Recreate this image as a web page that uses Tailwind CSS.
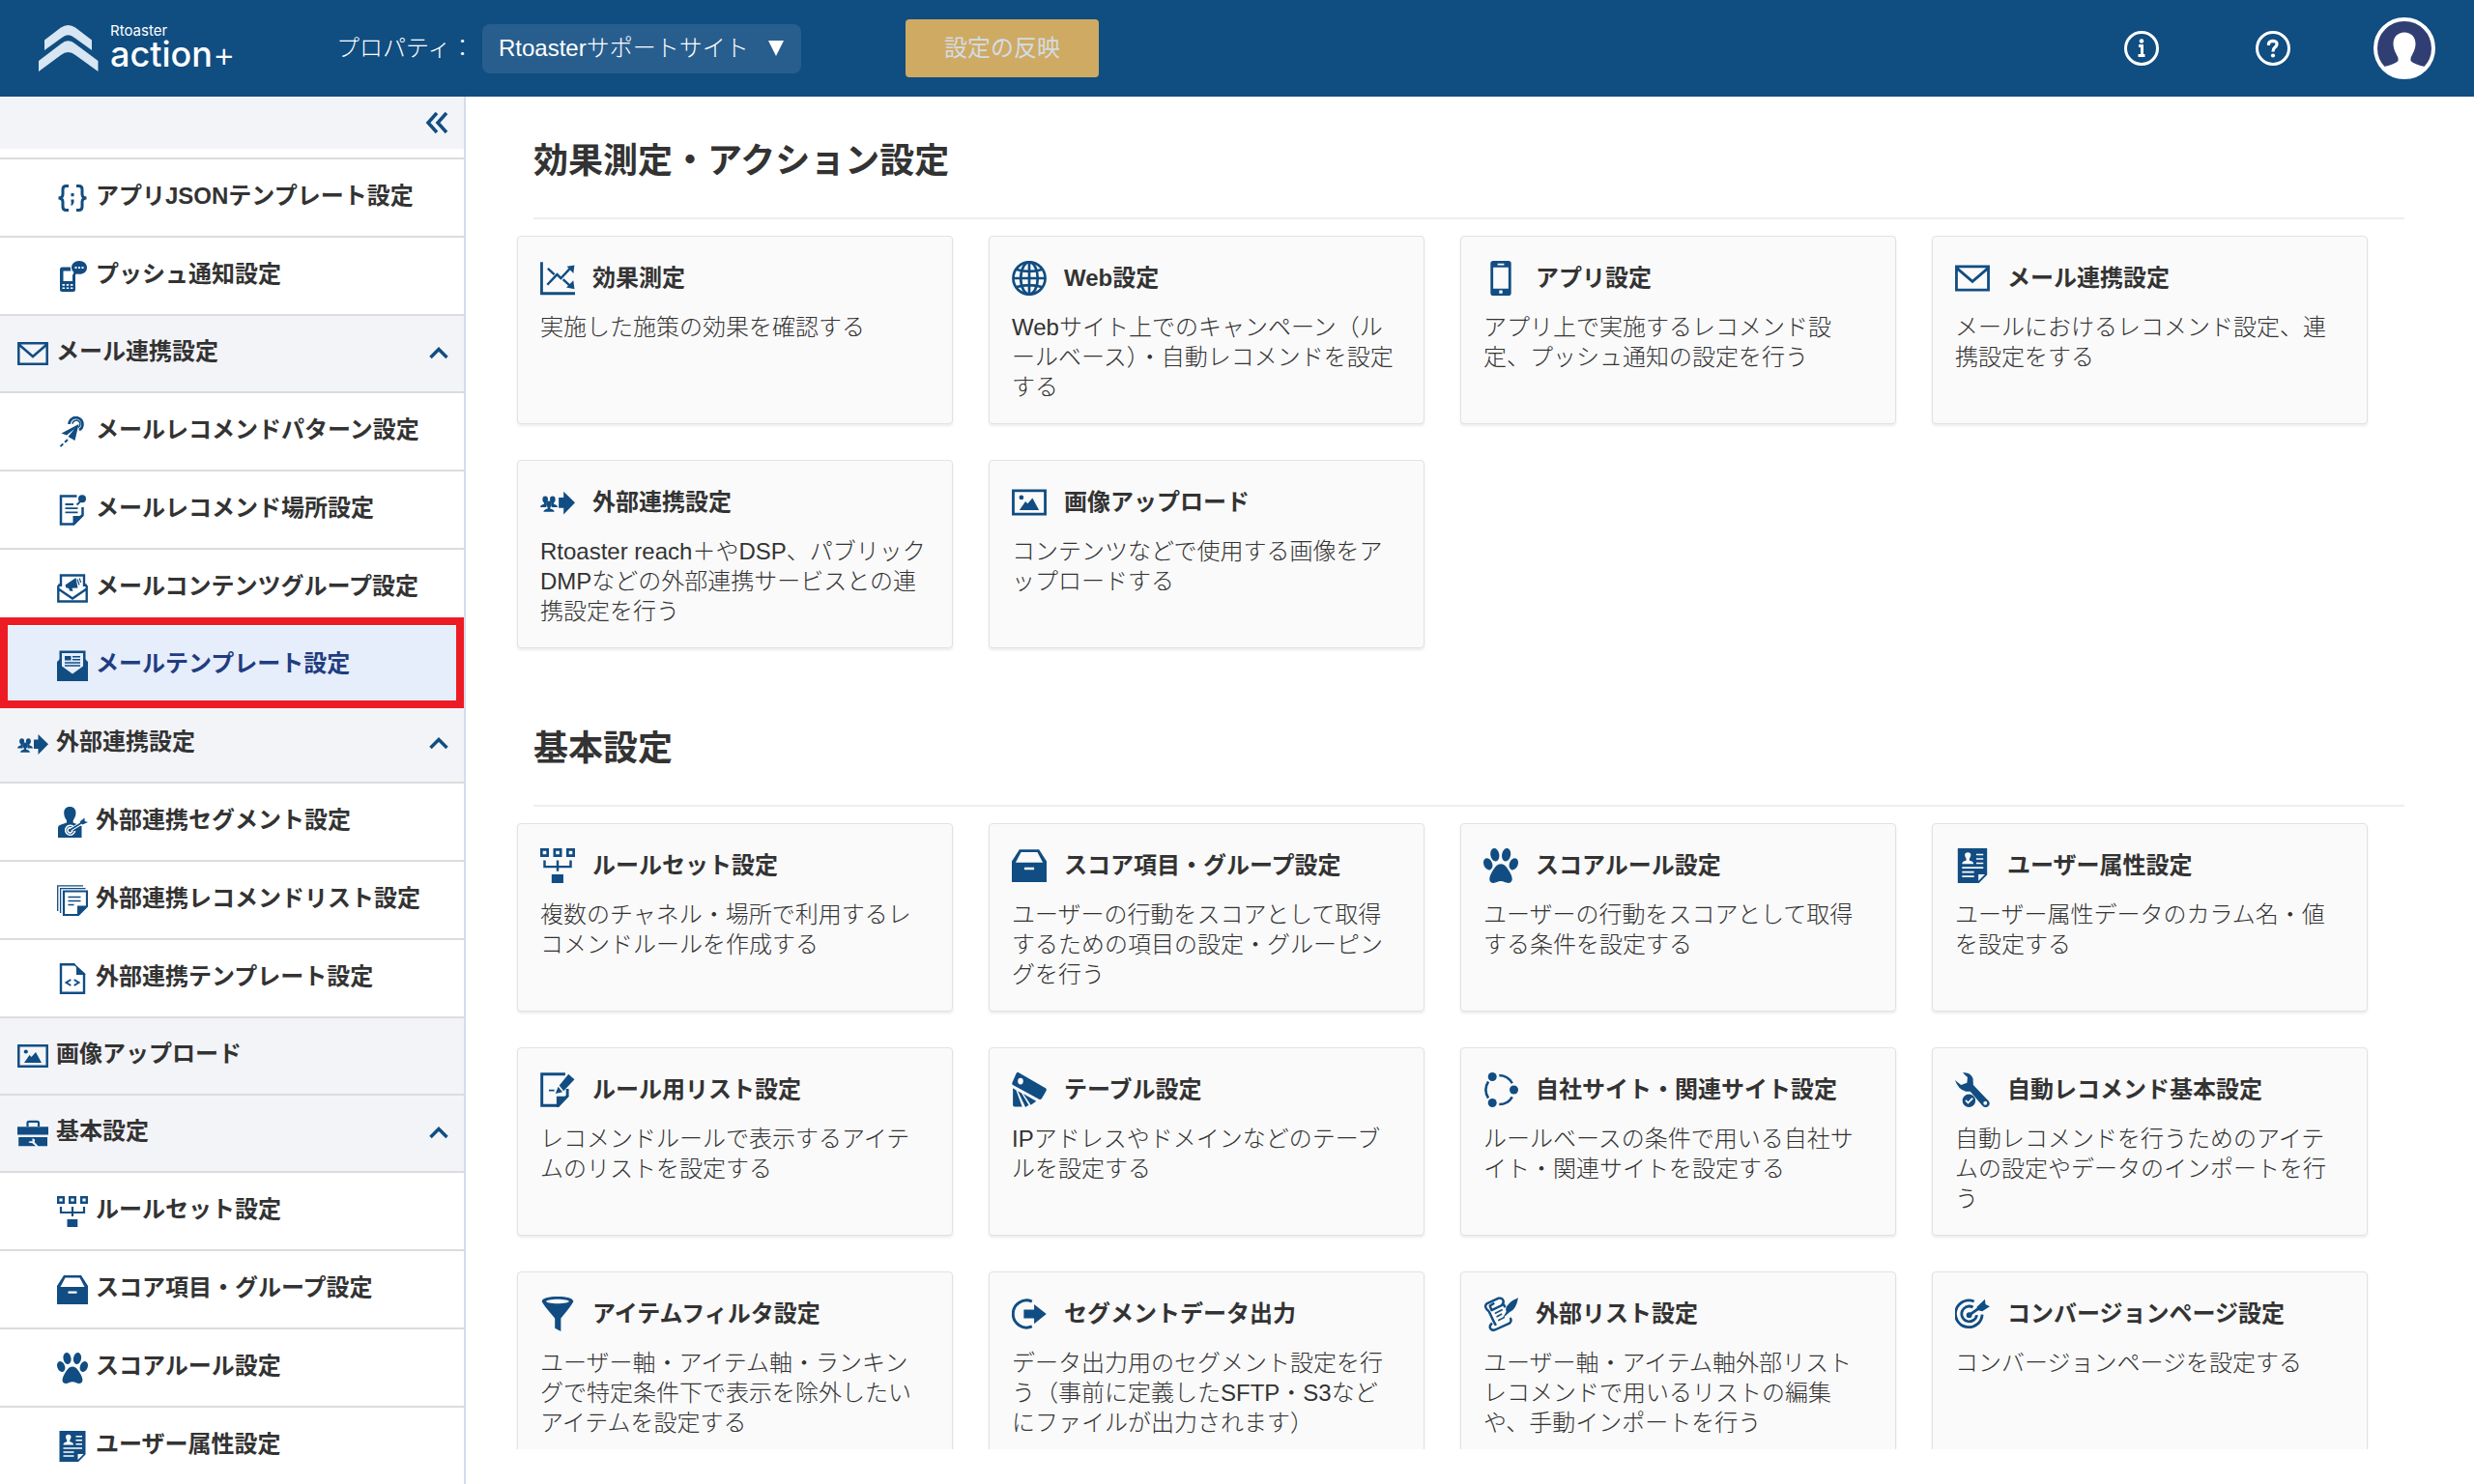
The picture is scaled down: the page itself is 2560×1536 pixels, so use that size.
<!DOCTYPE html>
<html lang="ja">
<head>
<meta charset="utf-8">
<meta name="viewport" content="width=device-width, initial-scale=1">
<title>Rtoaster action+</title>
<script src="https://cdn.jsdelivr.net/npm/@tailwindcss/browser@4"></script>
</head>
<body class="bg-white text-[#333] font-['Liberation_Sans','Noto_Sans_CJK_JP',sans-serif]">

<svg class="hidden" aria-hidden="true">
  <symbol id="i-json" viewBox="0 0 32 32"><path fill="none" stroke="currentColor" stroke-width="3" d="M12 3.500H9.500Q6 3.500 6 7V12Q6 16 1.500 16Q6 16 6 20V25Q6 28.500 9.500 28.500H12M20 3.500H22.500Q26 3.500 26 7V12Q26 16 30.500 16Q26 16 26 20V25Q26 28.500 22.500 28.500H20"/><path fill="currentColor" d="M14.500 11h3v3.200h-3zM14.500 17.500h3v3l-1.500 3h-1.800l.8-3h-.5z"/></symbol>
  <symbol id="i-push" viewBox="0 0 32 32"><path fill="currentColor" fill-rule="evenodd" d="M5 6.500H14a9 9 0 0 0 .5 4H6.500V21H16V15l3-2.500V29.500a2.500 2.500 0 0 1-2.500 2.500h-11A2.500 2.500 0 0 1 3 29.500V9A2.500 2.500 0 0 1 5 6.500zM5.500 24v1.800h2.500V24zm4.200 0v1.800h2.500V24zm4.200 0v1.800h2.500V24zM5.500 27.500v1.500h2.500v-1.500zm4.200 0v1.500h2.500v-1.500zm4.200 0v1.500h2.500v-1.500z"/><path fill="currentColor" fill-rule="evenodd" d="M23 0c4.600 0 8 3 8 7s-3.400 6.800-7.800 6.800c-1 0-2-.2-2.800-.4L16 15.500l1.400-3.800C15.800 10.400 15 8.800 15 7c0-4 3.400-7 8-7zM18.500 6v2h2V6zm3.500 0v2h2V6zm3.500 0v2h2V6z"/></symbol>
  <symbol id="i-mail" viewBox="0 0 32 32"><path fill="none" stroke="currentColor" stroke-width="2.500" d="M1.300 5.200H30.700V26.800H1.300zM1.500 6.500L16 19L30.500 6.500"/></symbol>
  <symbol id="i-target-plane" viewBox="0 0 32 32"><g fill="none" stroke="currentColor"><path stroke-width="2.600" d="M12.500 8A7 7 0 1 1 23 14.200"/><path stroke-width="1.500" d="M16 7.800A4 4 0 1 1 22 11.500"/><path stroke-width="2" stroke-dasharray="4 2.400" d="M11 24L3 31.500"/></g><path fill="currentColor" d="M22.500 8L4.500 17.500L10 19.500L18 13L11.500 21L18.500 25z"/></symbol>
  <symbol id="i-note-pin" viewBox="0 0 32 32"><path fill="none" stroke="currentColor" stroke-width="2.500" d="M20.500 1.500H4V30.500H17L26.500 21V13"/><path fill="currentColor" d="M16.500 31V22H27.500L18 31.500z"/><path stroke="currentColor" stroke-width="1.800" d="M8.500 10h8.500M8.500 14.200h13M8.500 18.400h13M20.500 10.500L26 5.500"/><circle cx="26" cy="4.200" r="4" fill="currentColor"/></symbol>
  <symbol id="i-mail-mega" viewBox="0 0 32 32"><path fill="none" stroke="currentColor" stroke-width="2.400" d="M4 14V2.500H28V14M1.300 13V29.500H30.700V13M1.300 13L4 12M30.700 13L28 12M1.300 16.500L16 26.500L30.700 16.500"/><path fill="currentColor" d="M8.500 12.500L19.500 5L21.500 15.500L15.500 15.700L16.500 19L13 18.500L12 15.700L9.500 15.500z"/><path fill="none" stroke="currentColor" stroke-width="1.200" d="M21 6.500l2 6M23.200 5.500l1.500 4.500"/></symbol>
  <symbol id="i-mail-doc" viewBox="0 0 32 32"><path fill="currentColor" d="M0 12L3 9V32H0zM32 12L29 9V32H32z"/><path fill="currentColor" fill-rule="evenodd" d="M2.500 .5H29.500V15L32 13V32H0V13L2.500 15zM5 3V16.500L16 24.500L27 16.500V3z"/><path fill="currentColor" d="M8 6h6.500v4.500H8zM16 6h8v1.500h-8zM16 9h8v1.500h-8zM8 12.200h16v1.500H8zM8 15.200h16v1.500H8z"/></symbol>
  <symbol id="i-ext" viewBox="0 0 32 32"><g fill="currentColor"><path d="M17 11.500H21.500V6L32 16.300L21.500 27V21H17z"/><ellipse cx="4.600" cy="13.300" rx="2.500" ry="3"/><ellipse cx="11.400" cy="13.300" rx="2.500" ry="3"/><path d="M0 20.500Q.3 18 3.500 17.500V15h2.300v3L5.500 20.500zM16 20.500Q15.700 18 12.500 17.500V15h-2.300v3L10.500 20.500z"/><ellipse cx="8" cy="17.600" rx="2.500" ry="3"/><path d="M3 24.700Q3.300 22.200 6.800 21.700V19h2.400v2.700Q12.700 22.200 13 24.700z"/></g></symbol>
  <symbol id="i-seg" viewBox="0 0 32 32"><path fill="currentColor" d="M13.300 0c4 0 6.200 2.700 6.200 6.300 0 4-1.500 5.600-2.800 8v2.300L25.500 20v12H1V21.500Q1 19.500 3.500 18.800L10 16.600v-2.300C8.600 12 7.200 10.300 7.200 6.300 7.200 2.700 9.300 0 13.300 0z"/><path fill="none" stroke="#fff" stroke-width="1.600" d="M17.600 21.200A5 5 0 1 0 18.600 25M15.500 22.800A2.500 2.500 0 1 0 16 24.500"/><path stroke="#fff" stroke-width="3.600" d="M14 23.700L27 16"/><path stroke="currentColor" stroke-width="1.600" d="M13.500 24L27 15.800"/><path fill="currentColor" d="M23.500 15.500L28.500 11.500L28.700 15L32 16L26.500 18.500z"/></symbol>
  <symbol id="i-reclist" viewBox="0 0 32 32"><path fill="none" stroke="currentColor" stroke-width="1.300" d="M.7 27V.8H27M3.600 29V3.700H29.500"/><path fill="none" stroke="currentColor" stroke-width="2.200" d="M7 6.500H31V22L22 31H7z"/><path fill="currentColor" d="M21 31V21.500H31.500L22 31.500z"/><path stroke="currentColor" stroke-width="1.500" d="M11.500 12.500h13M11.500 16.500h13M11.500 20.500h6"/></symbol>
  <symbol id="i-codefile" viewBox="0 0 32 32"><path fill="none" stroke="currentColor" stroke-width="2.400" d="M18.500 1.300H4V30.700H28V11"/><path fill="currentColor" d="M17.500 0L29.300 10.700V12H20V6Q20 2.500 17.500 2.500z"/><path fill="none" stroke="currentColor" stroke-width="2" d="M14.300 17L9.500 20L14.300 23M17.700 17L22.500 20L17.700 23"/></symbol>
  <symbol id="i-image" viewBox="0 0 32 32"><path fill="none" stroke="currentColor" stroke-width="2.500" d="M1.300 5.300H30.700V26.700H1.300z"/><circle cx="8.800" cy="11.500" r="2.100" fill="currentColor"/><path fill="currentColor" d="M7 23L12.500 15L14.500 17L19 12L25 23z"/></symbol>
  <symbol id="i-toolbox" viewBox="0 0 32 32"><path fill="none" stroke="currentColor" stroke-width="2.200" d="M10.500 9V5.200Q10.500 3.800 12 3.800H20.500Q22 3.800 22 5.200V9"/><path fill="currentColor" d="M0 9.300H32V17.500H0zM1.200 20H31V29.300H21.500L17.800 25.300L18 22.300L15.500 21.300V24.200H12.500L11.500 25.500L15.500 26.200L19 29.300H1.200z"/></symbol>
  <symbol id="i-ruleset" viewBox="0 0 32 32"><g fill="none" stroke="currentColor"><path stroke-width="2.400" d="M1.200 1.200H6.800V6.800H1.200zM13.200 1.200H18.800V6.800H13.200zM25.200 1.200H30.800V6.800H25.200z"/><path stroke-width="2.200" d="M4 11V17H28V11M16 11V21"/></g><path fill="currentColor" d="M10.500 24H21.300V32H10.500z"/></symbol>
  <symbol id="i-drawer" viewBox="0 0 32 32"><path fill="currentColor" fill-rule="evenodd" d="M7 1H25L32 12V31H0V12zM8.500 3.500L3.500 13H28.500L23.500 3.500zM11.500 17.500V19.700H20.500V17.500z"/></symbol>
  <symbol id="i-paw" viewBox="0 0 32 32"><g fill="currentColor"><ellipse cx="10.500" cy="6" rx="4" ry="6" transform="rotate(-10 10.500 6)"/><ellipse cx="21" cy="6" rx="4" ry="6" transform="rotate(10 21 6)"/><ellipse cx="4.200" cy="14.500" rx="3.900" ry="5.600" transform="rotate(-22 4.200 14.500)"/><ellipse cx="27.800" cy="14.500" rx="3.900" ry="5.600" transform="rotate(22 27.800 14.500)"/><path d="M16 14.500c4 0 6.500 4.500 8.500 8 3 5.200 2.500 9.500-1.700 9.500-2.500 0-4-1.700-6.800-1.700S11.700 32 9.200 32c-4.200 0-4.700-4.300-1.700-9.500 2-3.500 4.500-8 8.500-8z"/></g></symbol>
  <symbol id="i-userattr" viewBox="0 0 32 32"><path fill="currentColor" fill-rule="evenodd" d="M2.500 0H29.500V24.500L22 32H2.500zM6.500 14.500H17Q17 12 13.200 11.300V9.500Q14.500 8 14.500 6.300 14.500 3.800 11.800 3.800T9 6.300Q9 8 10.300 9.500V11.300Q6.500 12 6.500 14.500zM19.500 5V6.500H26V5zM19.500 9V10.500H26V9zM19.500 13V14.500H26V13zM6.500 17.200V18.700H26V17.200zM6.500 21.200V22.700H17.500V21.200zM6.500 25.200V26.700H17.500V25.200zM21.500 24V30L27.500 24z"/></symbol>
  <symbol id="i-chart" viewBox="0 0 32 32"><path fill="none" stroke="currentColor" stroke-width="2.500" d="M1.300 1V30H32"/><path fill="none" stroke="currentColor" stroke-width="2.200" d="M6.500 22L15.500 12.500L19 16L27 7.500M7 7L13 12.500M21 17L27 22.500"/><path fill="currentColor" d="M31.500 4L24.500 5L30.500 11.500zM31.500 26L24 24.500L30.500 18z"/></symbol>
  <symbol id="i-globe" viewBox="0 0 32 32"><g fill="none" stroke="currentColor" stroke-width="2.400"><circle cx="16" cy="16" r="14.700"/><ellipse cx="16" cy="16" rx="7.800" ry="14.700"/><path d="M16 1.500V30.500M1.500 16H30.500M4.500 8Q16 11.500 27.500 8M4.500 24Q16 20.500 27.500 24"/></g></symbol>
  <symbol id="i-phone" viewBox="0 0 32 32"><path fill="currentColor" fill-rule="evenodd" d="M9 0H23A2.500 2.500 0 0 1 25.500 2.500V29.500A2.500 2.500 0 0 1 23 32H9A2.500 2.500 0 0 1 6.500 29.500V2.500A2.500 2.500 0 0 1 9 0zM9 6V25.500H23V6zM13 2.500V4H19V2.500zM14.500 27.200V30H17.500V27.200z"/></symbol>
  <symbol id="i-rulelist" viewBox="0 0 32 32"><path fill="none" stroke="currentColor" stroke-width="2.600" d="M23 1.500H1.500V30.500H16L25 21.500V15"/><path fill="currentColor" d="M15 32V22H26.500L17 32zM26 1.500L31.500 6.500L21.500 17L17.500 12zM16.500 13.200L20.500 18L14 19.500zM8 15.800H13V17.300H8z"/></symbol>
  <symbol id="i-table" viewBox="0 0 32 32"><path fill="currentColor" fill-rule="evenodd" d="M6 0L31 14.500Q32.500 15.500 31.500 17L27.500 24Q26.500 25.500 25 24.700L1 11.500Q0 11 .3 9.500L4 1Q4.800-.5 6 0zM8 5A2.500 3 0 1 0 8 11A2.500 3 0 1 0 8 5z"/><path fill="currentColor" d="M1 14.500L4 16.500L9.500 31.500H2.500Q1 31.500 1 30zM5.500 17L9 19L15.500 30L12.500 32zM10.500 19.500L22.500 26.500L17.500 30z"/></symbol>
  <symbol id="i-site" viewBox="0 0 32 32"><g fill="currentColor"><circle cx="8.200" cy="4" r="4"/><circle cx="8.200" cy="28" r="4"/><circle cx="28" cy="16" r="4"/></g><path fill="none" stroke="currentColor" stroke-width="2.300" d="M4.500 8.500A14 14 0 0 0 4.500 23.500M14.500 2.600A14 14 0 0 1 26.500 10M14.500 29.400A14 14 0 0 0 26.500 22.500"/></symbol>
  <symbol id="i-wrench" viewBox="0 0 32 32"><path fill="currentColor" fill-rule="evenodd" d="M7 .3Q14-.8 16.500 5.500L16.800 11.500L31 26.500Q33 29.500 30 31.500Q27.500 33 25 30.500L14 17.500Q4 18.500 0 7L5.500 11.500L11 9.500L11.500 4.500zM27.800 26.500A1.700 1.700 0 1 0 27.800 30A1.700 1.700 0 1 0 27.800 26.500z"/><path fill="currentColor" fill-rule="evenodd" d="M12.800 20A6 6 0 1 1 12.800 32A6 6 0 1 1 12.800 20zM9.200 26.300L12 29.200L16.800 24.300L15.600 23.200L12 26.800L10.400 25.200z"/></symbol>
  <symbol id="i-filter" viewBox="0 0 32 32"><path fill="currentColor" fill-rule="evenodd" d="M16 0C24 0 30.500 1.500 30.500 4.500Q29.500 7.500 19 20V32L13.500 29V20Q2.500 7.500 1.500 4.500C1.500 1.500 8 0 16 0zM16 2.500C10 2.500 5.500 3.500 5.500 4.500S10 6.500 16 6.500 26.500 5.500 26.500 4.500 22 2.500 16 2.500z"/></symbol>
  <symbol id="i-export" viewBox="0 0 32 32"><path fill="none" stroke="currentColor" stroke-width="2.600" d="M18.500 4.500A12.500 12.500 0 1 0 18.500 27.500"/><path fill="currentColor" d="M11 12H20.500V7L31.800 16L20.500 25V20H11z"/></symbol>
  <symbol id="i-scroll" viewBox="0 0 32 32"><path fill="none" stroke="currentColor" stroke-width="2.200" stroke-linejoin="round" d="M5 13.500Q0 9.500 3 6.500L14 1.500Q18 1 18.500 5L17 8L7.500 12.500L6 8.500L10 6M5 13.500L10 24M18.500 7L20 10M8 24.500Q5 27 6.500 29.500Q8.500 32 12 30L24 24.500Q26.500 22 24.500 19.500M10 24L11.500 26.500"/><path stroke="currentColor" stroke-width="1.400" d="M10.500 15.500L17.500 12M12 18.700L17 16M13.500 22L19.500 19"/><path fill="currentColor" d="M32 1Q22 5 20.500 11.500L21 14L17.500 20L24 14.500Q30 12 32 1z"/></symbol>
  <symbol id="i-conv" viewBox="0 0 32 32"><g fill="none" stroke="currentColor" stroke-width="2.500"><path d="M17.500 4.500A12.300 12.300 0 1 0 25 16.500"/><path d="M16.500 9.800A7 7 0 1 0 20 17"/><path d="M13 17L26 8"/></g><circle cx="13" cy="17" r="2.600" fill="currentColor"/><path fill="currentColor" d="M20 9.500L27.500 2.500L28 7L32 9L25 13.500L20.500 12.500z"/></symbol>
</svg>

<div class="flex h-screen flex-col">
  <header class="flex h-[100px] shrink-0 items-center bg-[#104d81] text-2xl text-white">
    <a href="#" class="ml-10 flex w-[308px] items-center gap-3" aria-label="Rtoaster action+">
      <svg class="h-[50px] w-[62px] shrink-0 text-[#d8e5f2]" viewBox="0 0 62 50" fill="currentColor" aria-hidden="true">
        <path d="M6 16.500L23 3.500Q30.500-1.500 38 3.500L55 16.500V27L37 14Q30.500 8.500 24 14L6 27z"/>
        <path d="M0 38L23 20.500Q30.500 14 38 20.500L61.500 38V49L38 32Q30.500 26 23 32L0 49z"/>
      </svg>
      <span class="flex flex-col pb-1.5 font-['Inter',sans-serif]">
        <span class="text-[15px] leading-[18px]">Rtoaster</span>
        <span class="text-4xl leading-[30px] font-medium">action<span class="font-light">+</span></span>
      </span>
    </a>
    <label for="property" class="w-[151px] whitespace-nowrap font-light">プロパティ：</label>
    <div class="relative">
      <select id="property" class="h-[51px] w-[330px] appearance-none rounded-lg bg-[#285e8e] px-[17px] font-light text-white">
        <option>Rtoasterサポートサイト</option>
      </select>
      <svg class="pointer-events-none absolute top-[17px] right-[18px] h-4 w-4" viewBox="0 0 16 16" aria-hidden="true"><path fill="#fff" d="M0 0H16L8 16z"/></svg>
    </div>
    <button type="button" class="ml-[108px] h-[60px] w-[200px] rounded bg-[#cfaa62] text-[#d3dce2]">設定の反映</button>
    <div class="mr-10 ml-auto flex items-center">
      <button type="button" class="mr-[100px]" aria-label="お知らせ">
        <svg class="h-9 w-9" viewBox="0 0 36 36" fill="none" stroke="#fff"><circle cx="18" cy="18" r="16.500" stroke-width="3"/><path stroke-width="3" d="M15 15.500H18.500V26M14.500 25.500H21.500"/><circle cx="18" cy="10.500" r="2.300" fill="#fff" stroke="none"/></svg>
      </button>
      <button type="button" class="mr-[86px]" aria-label="ヘルプ">
        <svg class="h-9 w-9" viewBox="0 0 36 36" fill="none" stroke="#fff"><circle cx="18" cy="18" r="16.500" stroke-width="3"/><path stroke-width="3.200" d="M13.500 15V13Q14.500 10.300 18 10.300Q22.500 10.500 22 14Q21.500 16 19.500 17.500Q18 18.800 18 21.500"/><circle cx="18" cy="25.500" r="2.100" fill="#fff" stroke="none"/></svg>
      </button>
      <button type="button" aria-label="アカウント">
        <svg class="h-16 w-16" viewBox="0 0 64 64"><circle cx="32" cy="32" r="30" fill="#303e73"/><path fill="#fff" d="M32 15.500C39 15.500 43.500 20.500 43.500 27C43.500 34 40 38 38.500 42V45Q42 48.500 53 51Q45 62 32 62T11 51Q22 48.500 25.500 45V42C24 38 20.500 34 20.500 27C20.500 20.500 25 15.500 32 15.500z"/><circle cx="32" cy="32" r="30" fill="none" stroke="#fff" stroke-width="4"/></svg>
      </button>
    </div>
  </header>

  <div class="flex min-h-0 flex-1">
    <aside class="flex w-[482px] shrink-0 flex-col border-r-2 border-[#d6dceb]">
      <div class="flex h-[54px] shrink-0 items-center justify-end bg-[#f3f4f8] pr-4">
        <button type="button" aria-label="メニューを閉じる">
          <svg class="h-6 w-6 text-[#114d82]" viewBox="0 0 24 24" fill="none" stroke="currentColor" stroke-width="3.500"><path d="M12 2L3 12L12 22M22 2L13 12L22 22"/></svg>
        </button>
      </div>
      <nav id="menu" class="flex-1 overflow-y-auto pt-[9px] text-2xl font-bold [scrollbar-width:none]"></nav>
    </aside>

    <main id="main" class="mb-9 min-w-0 flex-1 overflow-y-auto pr-[110px] pl-[53px] text-2xl [scrollbar-width:none]"></main>
  </div>
</div>

<script>
const icon = (id, cls) => `<svg class="${cls}" aria-hidden="true"><use href="#i-${id}"/></svg>`;

// kind: g = group heading, p = plain top-level link, s = sub item, a = current sub item
const menu = [
  ['s', 'json', 'アプリJSONテンプレート設定'],
  ['s', 'push', 'プッシュ通知設定'],
  ['g', 'mail', 'メール連携設定'],
  ['s', 'target-plane', 'メールレコメンドパターン設定'],
  ['s', 'note-pin', 'メールレコメンド場所設定'],
  ['s', 'mail-mega', 'メールコンテンツグループ設定'],
  ['a', 'mail-doc', 'メールテンプレート設定'],
  ['g', 'ext', '外部連携設定'],
  ['s', 'seg', '外部連携セグメント設定'],
  ['s', 'reclist', '外部連携レコメンドリスト設定'],
  ['s', 'codefile', '外部連携テンプレート設定'],
  ['p', 'image', '画像アップロード'],
  ['g', 'toolbox', '基本設定'],
  ['s', 'ruleset', 'ルールセット設定'],
  ['s', 'drawer', 'スコア項目・グループ設定'],
  ['s', 'paw', 'スコアルール設定'],
  ['s', 'userattr', 'ユーザー属性設定'],
];
const chevron = `<svg class="ml-auto h-5 w-5 text-[#114d82]" viewBox="0 0 20 20" fill="none" stroke="currentColor" stroke-width="3.500" aria-hidden="true"><path d="M1.500 14L10 5.500L18.500 14"/></svg>`;
const rows = {
  s: (i, t) => `<a href="#" class="flex h-[81px] items-center gap-2 border-t-2 border-[#dcdcdc] bg-white pl-[59px]">${i}<span class="pb-1">${t}</span></a>`,
  a: (i, t) => `<a href="#" aria-current="page" class="relative flex h-[81px] items-center gap-2 bg-[#e6edfb] pl-[59px] text-[#213c80]">${i}<span class="pb-1">${t}</span><span class="absolute inset-x-0 -top-[9px] -bottom-1 border-8 border-[#ed1c24]"></span></a>`,
  p: (i, t) => `<a href="#" class="flex h-20 items-center gap-2 border-t-2 border-[#dcdcdc] bg-[#f3f4f8] pl-[18px]">${i}<span class="pb-1">${t}</span></a>`,
  g: (i, t) => `<button type="button" aria-expanded="true" class="flex h-20 w-full items-center gap-2 border-t-2 border-[#dcdcdc] bg-[#f3f4f8] pr-4 pl-[18px] text-left">${i}<span class="pb-1">${t}</span>${chevron}</button>`,
};
document.getElementById('menu').innerHTML =
  menu.map(([k, i, t]) => rows[k](icon(i, 'h-8 w-8 shrink-0 text-[#114d82]'), t)).join('');

const sections = [
  ['効果測定・アクション設定', [
    ['chart', '効果測定', '実施した施策の効果を確認する'],
    ['globe', 'Web設定', 'Webサイト上でのキャンペーン（ルールベース）・自動レコメンドを設定する'],
    ['phone', 'アプリ設定', 'アプリ上で実施するレコメンド設定、プッシュ通知の設定を行う'],
    ['mail', 'メール連携設定', 'メールにおけるレコメンド設定、連携設定をする'],
    ['ext', '外部連携設定', 'Rtoaster reach＋やDSP、パブリックDMPなどの外部連携サービスとの連携設定を行う'],
    ['image', '画像アップロード', 'コンテンツなどで使用する画像をアップロードする'],
  ]],
  ['基本設定', [
    ['ruleset', 'ルールセット設定', '複数のチャネル・場所で利用するレコメンドルールを作成する'],
    ['drawer', 'スコア項目・グループ設定', 'ユーザーの行動をスコアとして取得するための項目の設定・グルーピングを行う'],
    ['paw', 'スコアルール設定', 'ユーザーの行動をスコアとして取得する条件を設定する'],
    ['userattr', 'ユーザー属性設定', 'ユーザー属性データのカラム名・値を設定する'],
    ['rulelist', 'ルール用リスト設定', 'レコメンドルールで表示するアイテムのリストを設定する'],
    ['table', 'テーブル設定', 'IPアドレスやドメインなどのテーブルを設定する'],
    ['site', '自社サイト・関連サイト設定', 'ルールベースの条件で用いる自社サイト・関連サイトを設定する'],
    ['wrench', '自動レコメンド基本設定', '自動レコメンドを行うためのアイテムの設定やデータのインポートを行う'],
    ['filter', 'アイテムフィルタ設定', 'ユーザー軸・アイテム軸・ランキングで特定条件下で表示を除外したいアイテムを設定する'],
    ['export', 'セグメントデータ出力', 'データ出力用のセグメント設定を行う（事前に定義したSFTP・S3などにファイルが出力されます）'],
    ['scroll', '外部リスト設定', 'ユーザー軸・アイテム軸外部リストレコメンドで用いるリストの編集や、手動インポートを行う'],
    ['conv', 'コンバージョンページ設定', 'コンバージョンページを設定する'],
  ]],
];
const card = ([i, t, d]) => `<a href="#" class="block min-h-[195px] rounded border border-[#e2e2e2] bg-[#fafafa] pt-[25px] pr-[25px] pl-[23px] shadow-[0_2px_3px_rgba(0,0,0,0.08)]">
  <h3 class="flex h-9 items-center gap-[18px] font-bold">${icon(i, 'h-9 w-9 shrink-0 text-[#114d82]')}<span>${t}</span></h3>
  <p class="mt-[17px] leading-[31px] font-light break-all">${d}</p></a>`;
document.getElementById('main').innerHTML = sections.map(([t, c]) => `<section class="mb-[37px]">
  <h2 class="-mr-[38px] mb-[17px] ml-[17px] flex h-[127px] items-center border-b-2 border-[#eeeeee] pt-[9px] text-4xl font-bold">${t}</h2>
  <div class="grid grid-cols-4 gap-[37px]">${c.map(card).join('')}</div></section>`).join('');
</script>
</body>
</html>
